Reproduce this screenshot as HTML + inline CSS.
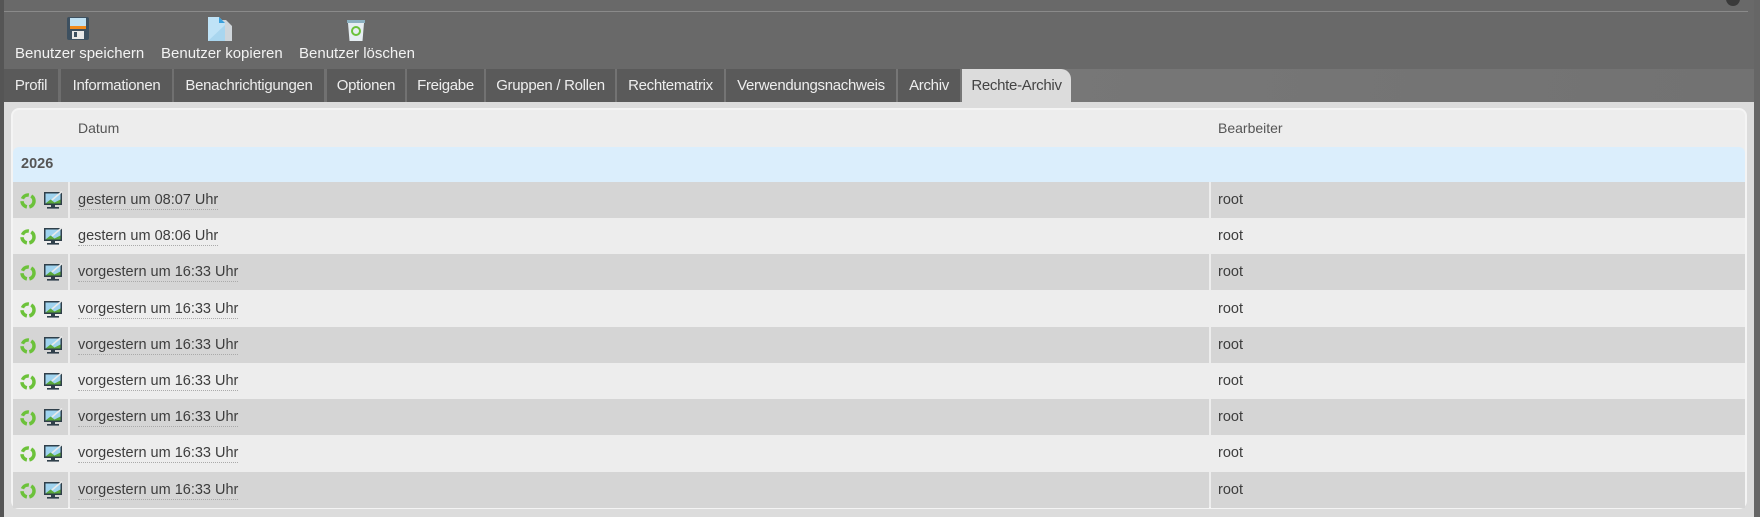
<!DOCTYPE html>
<html><head><meta charset="utf-8"><style>
*{margin:0;padding:0;box-sizing:border-box}
body{width:1760px;height:517px;overflow:hidden;background:#696969;font-family:"Liberation Sans",sans-serif;position:relative}
.abs{position:absolute}
.tb{color:#f2f2f2;font-size:15px;top:45px}
.tab{position:absolute;top:69px;height:33px;background:#5a5a5a;color:#eee;font-size:15px;line-height:33px;text-align:center;white-space:nowrap;letter-spacing:-0.3px;overflow:hidden}
.tab.act{background:#dcdcdc;color:#444;border-top-right-radius:10px}
.row{position:absolute;left:13px;width:1732px;height:36px}
.row .c1{position:absolute;left:0;width:55px;height:100%}
.row .c2{position:absolute;left:57px;width:1139px;height:100%}
.row .c3{position:absolute;left:1198px;right:0;height:100%}
.d .c1,.d .c2,.d .c3{background:#d5d5d5}
.t{position:absolute;left:65px;top:10px;font-size:14.5px;color:#3d3d3d;border-bottom:1px dotted #aaa;line-height:17px}
.r{position:absolute;top:10px;font-size:14.5px;color:#3d3d3d;line-height:17px}
.ic{position:absolute;left:7px;top:9px}
</style></head><body>
<div class="abs" style="left:0;top:0;width:4px;height:517px;background:#555"></div>
<div class="abs" style="left:4px;top:11px;width:1744px;height:1px;background:#8a8a8a"></div>
<div class="abs" style="left:1726px;top:-8px;width:14px;height:14px;border-radius:50%;background:#3a3a3a"></div>
<svg class="abs" style="left:67px;top:17px" width="22" height="23" viewBox="0 0 22 23"><rect x="0" y="0" width="22" height="23" rx="2" fill="#3d5060"/><rect x="3" y="1" width="16" height="8" fill="#bfe0f2"/><rect x="3" y="9" width="16" height="3" fill="#f08a1c"/><rect x="5" y="14" width="12" height="8" fill="#e8e8e8"/><rect x="7" y="15" width="3" height="5" fill="#3d5060"/></svg>
<svg class="abs" style="left:207px;top:17px" width="26" height="24" viewBox="0 0 26 24"><path d="M10 3h9l6 6v15H10z" fill="#cfd6db"/><path d="M1 0h11l6 6v18H1z" fill="#bfe3f7"/><path d="M1 24L18 8v16z" fill="#a9d6ef"/><path d="M12 0v6h6z" fill="#3aa0dc"/></svg>
<svg class="abs" style="left:347px;top:20px" width="18" height="21" viewBox="0 0 18 21"><rect x="0" y="0" width="18" height="3" fill="#8bb0c0"/><path d="M1 3h16l-1.5 18h-13z" fill="#e6eef2"/><circle cx="9" cy="11" r="4" fill="none" stroke="#6cc23a" stroke-width="2"/></svg>
<div class="abs tb" style="left:15px">Benutzer speichern</div>
<div class="abs tb" style="left:161px">Benutzer kopieren</div>
<div class="abs tb" style="left:299px">Benutzer löschen</div>
<div class="abs" style="left:4px;top:69px;width:1750px;height:33px;background:linear-gradient(100deg,#6e6e6e,#777 60%,#727272)"></div>
<div class="tab" style="left:4px;width:54px">Profil</div>
<div class="tab" style="left:61px;width:111px">Informationen</div>
<div class="tab" style="left:174px;width:150px">Benachrichtigungen</div>
<div class="tab" style="left:327px;width:78px">Optionen</div>
<div class="tab" style="left:407px;width:77px">Freigabe</div>
<div class="tab" style="left:486px;width:129px">Gruppen / Rollen</div>
<div class="tab" style="left:617px;width:107px">Rechtematrix</div>
<div class="tab" style="left:726px;width:170px">Verwendungsnachweis</div>
<div class="tab" style="left:898px;width:62px">Archiv</div>
<div class="tab act" style="left:962px;width:109px">Rechte-Archiv</div>
<div class="abs" style="left:4px;top:102px;width:1750px;height:415px;background:#dcdcdc"></div>
<div class="abs" style="left:1754px;top:0;width:6px;height:517px;background:#666"></div>
<div class="abs" style="left:11px;top:108px;width:1736px;height:401px;background:#ededed;border:2px solid #f4f4f4;border-radius:8px"></div>
<div class="abs" style="left:78px;top:120px;font-size:14px;color:#555">Datum</div>
<div class="abs" style="left:1218px;top:120px;font-size:14px;color:#555">Bearbeiter</div>
<div class="abs" style="left:13px;top:147px;width:1732px;height:35px;background:#dbeefc;border-radius:6px 6px 0 0"></div>
<div class="abs" style="left:21px;top:156px;font-size:14.5px;font-weight:bold;color:#555">2026</div>
<div id="rows"></div>
<script>
var texts=["gestern um 08:07 Uhr","gestern um 08:06 Uhr"];for(var i=0;i<7;i++)texts.push("vorgestern um 16:33 Uhr");
var ic='<svg class="ic" width="44" height="19" viewBox="0 0 44 19"><circle cx="8" cy="10" r="6" fill="none" stroke="#6cc23a" stroke-width="3.5" stroke-dasharray="8 2.5"/><rect x="24" y="1" width="18" height="13" fill="#2f3f4a"/><rect x="25.5" y="2.5" width="15" height="10" fill="#9fd3ef"/><path d="M25.5 12.5l5-4 4 3 6-3v4z" fill="#5aa83a"/><path d="M32 9l10-8.5" stroke="#eaeaea" stroke-width="1.6"/><rect x="31" y="14" width="4" height="2" fill="#2f3f4a"/><rect x="27" y="16" width="12" height="1.6" fill="#2f3f4a"/></svg>';
var h="";for(var i=0;i<9;i++){var y=182+i*36.2;h+='<div class="row'+(i%2==0?' d':'')+'" style="top:'+y+'px"><div class="c1"></div><div class="c2"></div><div class="c3"></div>'+ic+'<span class="t">'+texts[i]+'</span><span class="r" style="left:1205px">root</span></div>';}
document.getElementById("rows").innerHTML=h;
</script>
</body></html>
